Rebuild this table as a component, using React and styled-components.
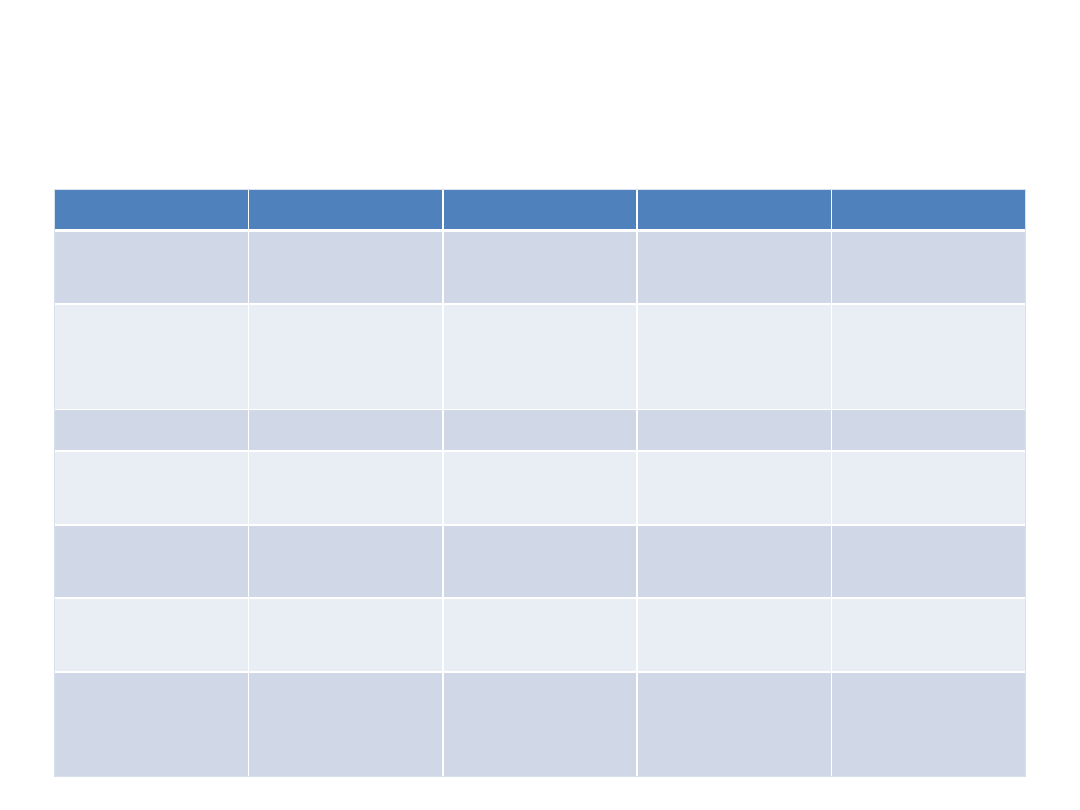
import React from 'react';
import styled, { createGlobalStyle } from 'styled-components';

const GlobalStyle = createGlobalStyle`
  html, body {
    margin: 0;
    padding: 0;
    background: #fff;
    font-family: "Liberation Sans", Arial, sans-serif;
  }
`;

const Slide = styled.div`
  width: 1080px;
  height: 810px;
  box-sizing: border-box;
  padding: 189px 0 0 54px;
  background: #fff;
  overflow: hidden;
`;

const Table = styled.div`
  width: 972px;
  box-sizing: border-box;
  border: 1px solid #d9e1ec;
  background: #fff;
  display: flex;
  flex-direction: column;
  gap: 1.5px;
`;

const Row = styled.div`
  display: grid;
  grid-template-columns: repeat(5, 1fr);
  column-gap: 1.5px;
  height: ${(p) => p.$h}px;
  margin-bottom: ${(p) => (p.$head ? 1.5 : 0)}px;
`;

const Cell = styled.div`
  background: ${(p) => (p.$head ? '#4f81bd' : p.$odd ? '#d0d8e8' : '#e9edf4')};
  font-size: 18px;
  color: ${(p) => (p.$head ? '#fff' : '#000')};
`;

const rows = [71, 104, 40, 72.5, 71.5, 72.5, 103];
const cols = [0, 1, 2, 3, 4];

export default function App() {
  return (
    <>
      <GlobalStyle />
      <Slide>
        <Table>
          <Row $h={39} $head>
            {cols.map((c) => (
              <Cell key={c} $head />
            ))}
          </Row>
          {rows.map((h, i) => (
            <Row key={i} $h={h}>
              {cols.map((c) => (
                <Cell key={c} $odd={i % 2 === 0} />
              ))}
            </Row>
          ))}
        </Table>
      </Slide>
    </>
  );
}
